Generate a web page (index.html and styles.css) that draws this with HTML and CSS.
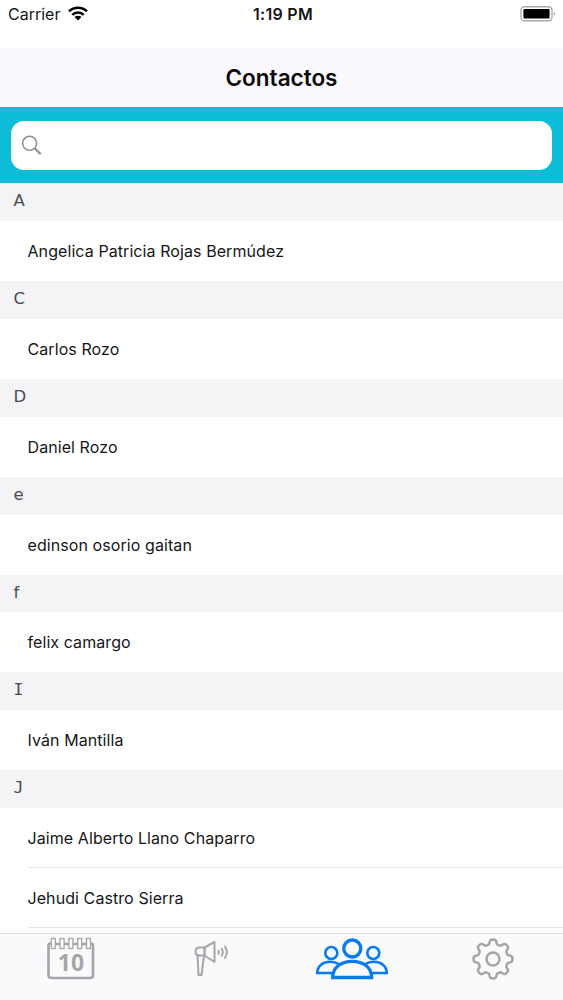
FILE: index.html
```html
<!DOCTYPE html>
<html lang="es">
<head>
    <meta charset="utf-8">
    <title>Contactos</title>
    <link rel="stylesheet" href="styles.css">
</head>
<body>
    <div class="app">
        <div class="status-bar">
            <div class="carrier">
                <span>Carrier</span>
                <svg class="wifi" width="20" height="15" viewBox="0 0 20 15">
                    <g fill="none" stroke="#000" stroke-width="2.5">
                        <path d="M1 5.3C6 .4 14 .4 19 5.3"/>
                        <path d="M4.3 8.8C7.5 5.7 12.5 5.7 15.7 8.8"/>
                    </g>
                    <path d="M6.5 11.1c2-1.8 5-1.8 7 0L10 14.5z"/>
                </svg>
            </div>
            <div class="time">1:19 PM</div>
            <svg class="battery" width="36" height="16" viewBox="0 0 36 16">
                <rect x="1" y=".8" width="31" height="14" rx="3.5" fill="#fff" stroke="#aaa" stroke-width="1.4"/>
                <rect x="3.4" y="3" width="26.2" height="9.6" rx="1"/>
                <path d="M33.8 5.5q2 2.3 0 4.6z" fill="#888"/>
            </svg>
        </div>

        <h1 class="title">Contactos</h1>

        <div class="search">
            <div class="search-box">
                <svg width="22" height="22" viewBox="0 0 22 22" fill="none" stroke="#909090">
                    <circle cx="8.6" cy="8.3" r="7" stroke-width="1.6"/>
                    <path d="M13.7 13.3l6 6" stroke-width="2.2"/>
                </svg>
            </div>
        </div>

        <div class="list">
            <div class="letter">A</div>
            <div class="contact"><span>Angelica Patricia Rojas Bermúdez</span></div>
            <div class="letter">C</div>
            <div class="contact"><span>Carlos Rozo</span></div>
            <div class="letter">D</div>
            <div class="contact"><span>Daniel Rozo</span></div>
            <div class="letter">e</div>
            <div class="contact"><span>edinson osorio gaitan</span></div>
            <div class="letter">f</div>
            <div class="contact"><span>felix camargo</span></div>
            <div class="letter serif">I</div>
            <div class="contact"><span>Iván Mantilla</span></div>
            <div class="letter serif">J</div>
            <div class="contact line"><span>Jaime Alberto Llano Chaparro</span></div>
            <div class="contact line"><span>Jehudi Castro Sierra</span></div>
        </div>

        <div class="tabs">
            <div class="tab">
                <!-- calendar -->
                <svg class="calendar" width="50" height="44" viewBox="0 0 50 44" fill="none" stroke="#a6a5a8">
                    <path d="M5 6.5H4.5Q2.5 6.5 2.5 8.5V38Q2.5 41 5.5 41H44Q47 41 47 38V8.5Q47 6.5 45 6.5H44" stroke-width="2.6"/>
                    <path d="M9 7h5M18 7h5M27 7h5M36 7h5" stroke-width="2.6"/>
                    <g fill="#fcfbfd" stroke-width="1.3">
                        <rect x="5.3" y="1.5" width="4" height="10"/>
                        <rect x="14.1" y="1.5" width="4" height="10"/>
                        <rect x="22.9" y="1.5" width="4" height="10"/>
                        <rect x="31.7" y="1.5" width="4" height="10"/>
                        <rect x="40.5" y="1.5" width="4" height="10"/>
                    </g>
                    <text class="day" x="25" y="33.5" text-anchor="middle">10</text>
                </svg>
            </div>
            <div class="tab">
                <!-- megaphone -->
                <svg width="36" height="42" viewBox="0 0 36 42" fill="none" stroke="#a6a5a8" stroke-width="2" stroke-linejoin="round">
                    <path d="M11.5 10.5H7Q2.5 10.5 2.5 14.5T7 18.5H11.5z"/>
                    <path d="M11.5 10.5L21.5 5V25L11.5 18.5z"/>
                    <path d="M4.5 18.5L5.5 38H8.5L11 18.5"/>
                    <path d="M25 13q1.5 2 0 4.5M28.3 11q3 4 0 8.5M31.6 9q4.5 6 0 12.5"/>
                </svg>
            </div>
            <div class="tab">
                <!-- people -->
                <svg width="74" height="44" viewBox="0 0 74 44" fill="none" stroke="#087bf0" stroke-width="2.6">
                    <circle cx="16.3" cy="16" r="6"/>
                    <circle cx="58.3" cy="16" r="6"/>
                    <path d="M19 36H2.3C2.3 29 8 24.8 15 24.8Q20 24.8 23.5 27"/>
                    <path d="M55 36H71.7C71.7 29 66 24.8 59 24.8Q54 24.8 50.5 27"/>
                    <circle cx="37.3" cy="11.5" r="8.5" stroke-width="3.3"/>
                    <path d="M17.7 40.5H56.7C56.7 30 48 24.3 37.2 24.3S17.7 30 17.7 40.5z" fill="#faf9fc" stroke-width="3.3"/>
                </svg>
            </div>
            <div class="tab">
                <!-- settings -->
                <svg width="44" height="44" viewBox="0 0 44 44" fill="none" stroke="#a6a5a8" stroke-width="2.5" stroke-linejoin="round">
                    <circle cx="22" cy="22" r="6.5"/>
                    <path id="gear" d=""/>
                </svg>
            </div>
        </div>
    </div>

    <script>
        // Eight rounded teeth around the centre of the icon
        let d = '';
        for (let i = 0; i <= 160; i++) {
            const a = i * Math.PI / 80;
            const r = 17.2 + 2.2 * Math.tanh(2.2 * Math.cos(8 * a)) / Math.tanh(2.2);
            d += (i ? 'L' : 'M') + (22 + r * Math.cos(a)).toFixed(2) + ' ' + (22 + r * Math.sin(a)).toFixed(2);
        }
        document.getElementById('gear').setAttribute('d', d + 'z');
    </script>
</body>
</html>
```
FILE: styles.css
```css
body {
    margin: 0;
    background-color: #fff;
    font-family: Inter, 'Liberation Sans', sans-serif;
    color: #161616;
}

.app {
    display: flex;
    flex-direction: column;
    height: 1000px;
    overflow: hidden;
}

.status-bar {
    display: grid;
    grid-template-columns: 1fr auto 1fr;
    align-items: center;
    height: 27px;
    margin-bottom: 21px;
    padding: 0 7px 0 8px;
    font-size: 16px;
}

.carrier {
    display: flex;
    align-items: center;
    gap: 8px;
}

.time {
    padding-left: 2px;
    font-weight: 600;
    letter-spacing: 0.3px;
}

.battery {
    justify-self: end;
}

.title {
    flex: none;
    height: 59.4px;
    margin: 0;
    background-color: #faf8fc;
    color: #0a0a0c;
    font-size: 22.5px;
    font-weight: 600;
    line-height: 60px;
    text-align: center;
}

.search {
    flex: none;
    box-sizing: border-box;
    height: 76px;
    padding: 14px 11px 13px;
    background-color: #0dbdd8;
}

.search-box {
    display: flex;
    align-items: center;
    height: 49px;
    padding-left: 10px;
    box-sizing: border-box;
    border-radius: 13px;
    background-color: #fff;
}

.list {
    flex: 1;
    min-height: 0;
    overflow: hidden;
}

.letter {
    height: 37.8px;
    padding-left: 13.5px;
    background-color: #f4f3f6;
    color: #4c4c4e;
    font-family: 'DejaVu Sans', sans-serif;
    font-size: 16.5px;
    line-height: 36.4px;
}

.letter.serif {
    font-family: 'DejaVu Sans Mono', monospace;
}

.contact {
    height: 60px;
    padding-left: 27.5px;
    font-size: 16px;
    letter-spacing: 0.08px;
    line-height: 60px;
}

.contact span {
    display: block;
}

.line span {
    box-sizing: border-box;
    height: 60px;
    border-bottom: 1px solid #e4e3e6;
}

.tabs {
    display: grid;
    grid-template-columns: repeat(4, 1fr);
    flex: none;
    box-sizing: border-box;
    height: 67px;
    padding-top: 3px;
    border-top: 1px solid #dddce0;
    background-color: #faf9fc;
}

.tab {
    display: flex;
    justify-content: center;
}

.calendar {
    margin-left: 2px;
}

.day {
    fill: #a6a5a8;
    font-family: 'Open Sans', sans-serif;
    stroke: none;
    font-size: 23px;
    font-weight: 700;
}
```
